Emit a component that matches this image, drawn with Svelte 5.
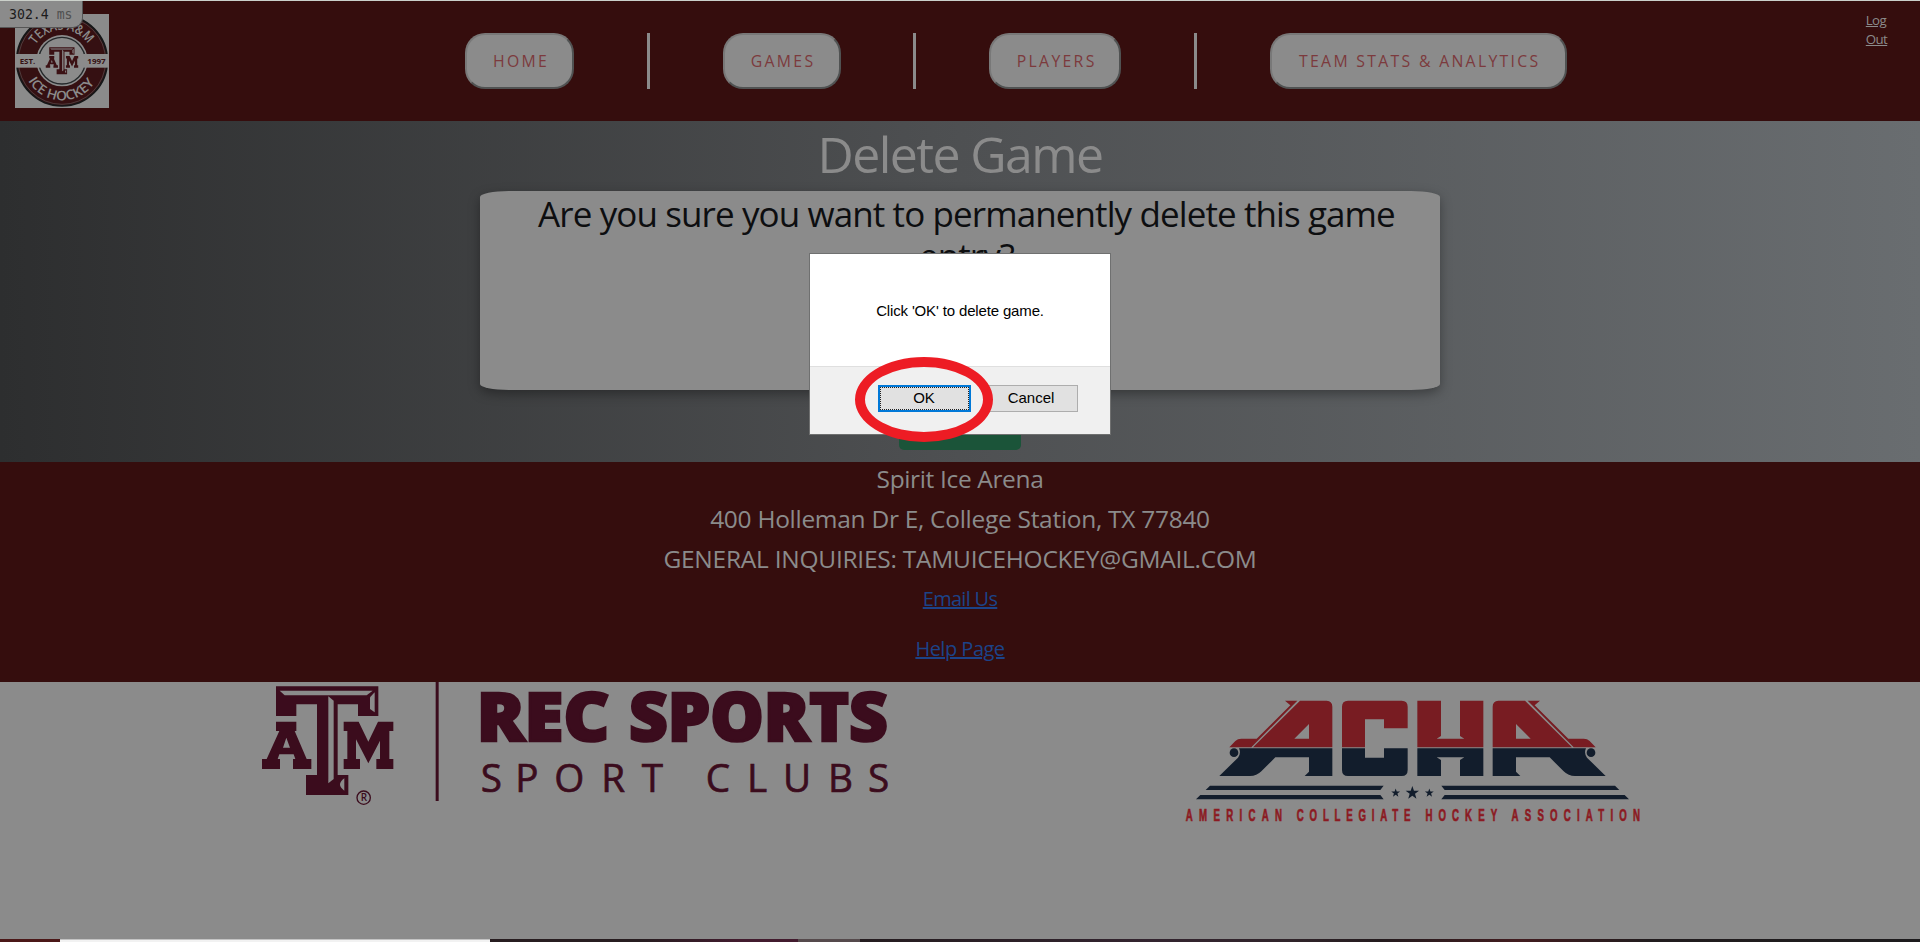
<script>
  const nav = [
    { label: 'HOME', width: 109 },
    { label: 'GAMES', width: 118 },
    { label: 'PLAYERS', width: 132 },
    { label: 'TEAM STATS & ANALYTICS', width: 297 }
  ];
  const star = 'M0 -21 L4.9 -6.5 H20 L8 2.5 L12.3 17 L0 8.2 L-12.3 17 L-8 2.5 L-20 -6.5 H-4.9 Z';
</script>

{#snippet monogram()}
  <path d="M108 49H415V138H354V103H293V315H325V375H198V315H231V103H169V138H108Z" />
  <path fill-rule="evenodd" d="M108 155H169V183H164L200 267H214V297H159V267H166L161 253H118L113 267H120V297H66V267H80L118 183H108ZM139 203L150 233H129Z" />
  <path d="M311 155H356L385 215L414 155H460V183H448V267H460V297H409V267H420V212L385 280L348 208V267H360V297H311V267H322V183H311Z" />
  <g fill="#8b8b8b">
    <path d="M119 62H398L380 76H134Z" />
    <path d="M390 82L404 67V127L390 117Z" />
    <path d="M265 79L281 92V327L265 340Z" />
    <path d="M313 325V362Q287 344 313 325Z" />
  </g>
{/snippet}

{#snippet wing()}
  <path fill="#781c22" fill-rule="evenodd" d="M390 62H470Q487 63 487 80V202H249ZM417 132L373 176H417Z" />
  <path fill="#781c22" d="M345 62H382L244 202H178L196 183Q203 176 214 176H260L361 76Z" />
  <path fill="#121d2c" d="M207 205H487V288H404L417 275V232H316L274 274Q260 288 240 288H148L204 233Q214 219 207 205Z" />
  <circle cx="192" cy="218" r="13" fill="#121d2c" />
  <path fill="#121d2c" d="M120 317H641L631 330H107ZM91 345H631L641 358H78Z" />
{/snippet}

<div class="page">
  <header>
    <svg class="crest" viewBox="0 0 282 282">
      <rect width="282" height="282" fill="#8b8b8b" />
      <circle cx="141" cy="140" r="136" fill="#351012" stroke="#151718" stroke-width="5" />
      <circle cx="141" cy="140" r="131" fill="none" stroke="#666" stroke-width="1.5" />
      <circle cx="141" cy="140" r="77" fill="#8b8b8b" />
      <circle cx="141" cy="140" r="70" fill="none" stroke="#24282a" stroke-width="4" />
      <rect y="120" width="282" height="41" fill="#8b8b8b" />
      <g transform="translate(76 88) scale(.247)" fill="#3b1114">{@render monogram()}</g>
      <path id="arc-top" fill="none" d="M62.3 92.2A92 92 0 0 1 219.7 92.2" />
      <path id="arc-bottom" fill="none" d="M39.2 200.5A118 118 0 0 0 242.8 200.5" />
      <g fill="#8b8b8b" font-weight="600" font-size="40">
        <text textLength="186" lengthAdjust="spacingAndGlyphs"><textPath href="#arc-top">TEXAS A&amp;M</textPath></text>
        <text textLength="238" lengthAdjust="spacingAndGlyphs"><textPath href="#arc-bottom">ICE HOCKEY</textPath></text>
      </g>
      <g fill="#351012" font-weight="700" font-size="22">
        <text x="14" y="149" textLength="47" lengthAdjust="spacingAndGlyphs">EST.</text>
        <text x="217" y="149" textLength="55" lengthAdjust="spacingAndGlyphs">1997</text>
      </g>
    </svg>
    <nav>
      {#each nav as item, i}
        {#if i > 0}<span class="divider"></span>{/if}
        <button style:width="{item.width}px">{item.label}</button>
      {/each}
    </nav>
    <a class="logout" href="#logout">Log Out</a>
    <div class="timing">302.4 <span>ms</span></div>
  </header>

  <main>
    <h1>Delete Game</h1>
    <section class="card">
      <h2>Are you sure you want to permanently delete this game<br />entry?</h2>
    </section>
    <div class="confirm"></div>
  </main>

  <footer>
    <p class="arena">Spirit Ice Arena</p>
    <p class="address">400 Holleman Dr E, College Station, TX 77840</p>
    <p class="inquiries">GENERAL INQUIRIES: TAMUICEHOCKEY@GMAIL.COM</p>
    <a class="email" href="#email">Email Us</a>
    <a href="#help">Help Page</a>
  </footer>

  <div class="sponsors">
    <svg class="rec" viewBox="0 36 1980 414" fill="#3b0c1d">
      {@render monogram()}
      <circle cx="371" cy="383" r="20" fill="none" stroke="#3b0c1d" stroke-width="4" />
      <text x="362" y="394" font-size="30" font-weight="600">R</text>
      <rect x="587" y="36" width="9" height="357" />
      <g font-size="204" font-weight="800" stroke="#3b0c1d" stroke-width="8">
        <text x="710" y="213" textLength="398" lengthAdjust="spacingAndGlyphs">REC</text>
        <text x="1167" y="213" textLength="776" lengthAdjust="spacingAndGlyphs">SPORTS</text>
      </g>
      <text y="365" font-size="116" stroke="#3b0c1d" stroke-width="2" x="722 826 943 1084 1205 1397 1521 1629 1764 1884">SPORTCLUBS</text>
    </svg>
    <svg class="acha" viewBox="0 6 1500 444">
      {@render wing()}
      <g transform="translate(1455 0) scale(-1 1)">{@render wing()}</g>
      <path fill="#781c22" d="M516 202V80Q516 62 534 62H695Q713 62 713 80V145H642V118H585V202ZM742 62H813V168L800 176H883L870 168V62H940V202H742Z" />
      <path fill="#121d2c" d="M516 205H585V233H642V205H713V270Q713 288 695 288H534Q516 288 516 270ZM742 205H940V288H870V240L883 232H800L813 240V288H742Z" />
      <g fill="#121d2c">
        <path d={star} transform="translate(727 339)" />
        <path d={star} transform="translate(677 339) scale(.66)" />
        <path d={star} transform="translate(778 339) scale(.66)" />
      </g>
      <g class="league" transform="scale(.58 1)" fill="#8b1a22" stroke="#8b1a22" stroke-width="2" font-size="50" font-weight="700">
        <text x="82" y="423" textLength="497">AMERICAN</text>
        <text x="656" y="423" textLength="588">COLLEGIATE</text>
        <text x="1321" y="423" textLength="371">HOCKEY</text>
        <text x="1767" y="423" textLength="664">ASSOCIATION</text>
      </g>
    </svg>
  </div>
  <div class="taskbar"><span></span></div>

  <div class="dialog">
    <div class="message">Click 'OK' to delete game.</div>
    <div class="actions">
      <button class="ok">OK</button>
      <button>Cancel</button>
    </div>
  </div>
  <div class="marker"></div>
</div>

<style>
  :global(body) { margin: 0; overflow: hidden; }
  .page {
    position: relative;
    display: flex;
    flex-direction: column;
    box-sizing: border-box;
    width: 1920px;
    height: 942px;
    overflow: hidden;
    border-top: 1px solid #cbd0ca;
    background: #8b8b8b;
    font-family: "Open Sans", "Noto Sans", sans-serif;
  }
  header {
    position: relative;
    display: flex;
    flex: none;
    height: 120px;
    background: #350d0d;
  }
  .crest { flex: none; width: 94px; height: 94px; margin: 13px 0 0 15px; }
  nav { display: flex; gap: 72.8px; height: 56px; margin: 32px 0 0 356px; }
  nav button {
    box-sizing: border-box;
    flex: none;
    padding: 0 0 1px 3px;
    border: 2px solid;
    border-color: #787878 #505252 #505252 #787878;
    border-radius: 20px;
    background: #8b8b8b;
    color: #7c3a3d;
    font: 15.8px/24px "Open Sans", sans-serif;
    letter-spacing: 2.3px;
    white-space: nowrap;
  }
  .divider { flex: none; width: 3px; background: #8b8b8b; }
  .logout {
    width: 24px;
    margin: 10px 0 0 299px;
    color: #8b8b8b;
    font-size: 13.3px;
    line-height: 19px;
    letter-spacing: -0.6px;
  }
  .timing {
    position: absolute;
    top: 0;
    left: 0;
    box-sizing: border-box;
    width: 83px;
    height: 27px;
    padding-left: 9px;
    border: solid #555;
    border-width: 0 1px 1px 0;
    border-radius: 0 0 10px 0;
    background: #8b8b8b;
    color: #1c1c1c;
    font: 13.2px/27px "DejaVu Sans Mono", monospace;
    white-space: nowrap;
  }
  .timing span { color: #505050; }
  main {
    display: flex;
    flex: none;
    flex-direction: column;
    align-items: center;
    height: 341px;
    background: linear-gradient(90deg, #2d2e2f, #4e5052 50%, #696d70);
  }
  h1 {
    height: 67px;
    margin: 0;
    padding-top: 3px;
    color: #8b8b8b;
    font-size: 50px;
    font-weight: 400;
    line-height: 60px;
    letter-spacing: -1.6px;
  }
  .card {
    width: 960px;
    height: 199px;
    border-radius: 3%;
    background: #8b8b8b;
    box-shadow: 0 4px 12px rgb(0 0 0 / 35%);
  }
  h2 {
    margin: 0;
    padding: 2px 0 0 13px;
    color: #0d0e10;
    font-size: 35px;
    font-weight: 400;
    line-height: 42px;
    letter-spacing: -0.9px;
    text-align: center;
    white-space: nowrap;
  }
  .confirm { width: 122px; height: 40px; margin-top: 20px; border-radius: 5px; background: #1b5439; }
  footer {
    display: flex;
    flex: none;
    flex-direction: column;
    align-items: center;
    box-sizing: border-box;
    height: 220px;
    padding-top: 2px;
    background: #350d0d;
    color: #8b8b8b;
    line-height: 30px;
  }
  footer p { margin: 0 0 10px; font-size: 24.5px; white-space: nowrap; }
  .arena { letter-spacing: -0.35px; }
  .address { letter-spacing: -0.29px; }
  .inquiries { letter-spacing: -0.25px; }
  footer a { margin: 0 0 20px; color: #1c4388; font-size: 20px; letter-spacing: -0.5px; }
  footer .email { letter-spacing: -0.7px; }
  .sponsors { display: flex; flex: 1; align-items: flex-start; }
  .sponsors svg { flex: none; overflow: visible; }
  .rec { width: 660px; height: 138px; margin-left: 240px; }
  .acha { width: 500px; height: 148px; margin-left: 270px; }
  .league { font-family: "Liberation Sans", sans-serif; }
  .taskbar {
    flex: none;
    height: 3px;
    padding-left: 60px;
    background: linear-gradient(90deg, #4b1818 60px, #271d20 490px, #271d20 640px, #421b2e 740px, #421b2e 798px, #554a4c 798px, #554a4c 860px, #241c1f 860px, #33242f 1150px, #30242a 1290px, #241b1e 1380px, #421c1f 1520px, #211c1e 1650px, #1d1b1d);
  }
  .taskbar span { display: block; box-sizing: border-box; width: 430px; height: 3px; border-top: 1px solid #c4c4c4; background: #f2f2f2; }
  .dialog {
    position: absolute;
    top: 252px;
    left: 809px;
    display: flex;
    flex-direction: column;
    box-sizing: border-box;
    width: 302px;
    height: 182px;
    border: 1px solid #6f7070;
    background: #fff;
    color: #000;
    font: 15px/20px "Liberation Sans", Arial, sans-serif;
  }
  .message { flex: 1; padding-top: 47px; text-align: center; letter-spacing: -0.15px; }
  .actions {
    display: flex;
    gap: 14px;
    box-sizing: border-box;
    height: 68px;
    padding: 18px 0 0 68px;
    border-top: 1px solid #dfdfdf;
    background: #f0f0f0;
  }
  .actions button {
    box-sizing: border-box;
    width: 93px;
    height: 27px;
    padding: 0 1px 2px 0;
    border: 1px solid #adadad;
    background: #e1e1e1;
    color: #000;
    font: 15px/20px "Liberation Sans", Arial, sans-serif;
  }
  .actions .ok { border: 2px solid #0078d7; outline: 1px dotted #222; outline-offset: -3px; }
  .marker {
    position: absolute;
    top: 356px;
    left: 855px;
    box-sizing: border-box;
    width: 138px;
    height: 85px;
    border: 10px solid #ed1c24;
    border-radius: 50%;
  }
</style>
